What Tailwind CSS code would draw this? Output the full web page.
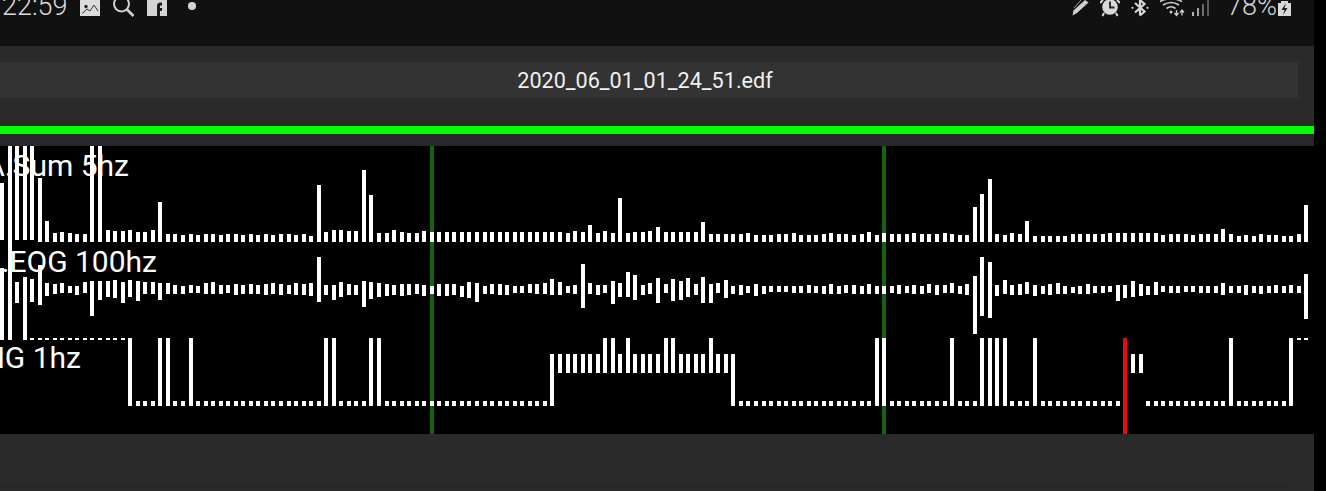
<!DOCTYPE html>
<html>
<head>
<meta charset="utf-8">
<script src="https://cdn.jsdelivr.net/npm/@tailwindcss/browser@4"></script>
</head>
<body class="bg-black overflow-hidden font-['Roboto',sans-serif]">
<div class="w-[1326px] h-[491px] flex bg-black overflow-hidden">
  <main class="w-[1314px] h-[491px] flex flex-col shrink-0">
    <!-- status bar -->
    <header class="h-[46px] bg-[#111111] flex justify-between items-start text-[#d8d8d8] shrink-0">
      <div class="flex items-start pl-[2px]">
        <span class="w-[65px] h-[20px] flex items-end text-[27px] leading-none font-light whitespace-nowrap">22:59</span>
        <svg class="ml-[13px]" width="20" height="17" viewBox="0 0 20 17"><rect width="20" height="16" fill="#dcdcdc"/><circle cx="6" cy="6.5" r="1.7" fill="#222"/><path d="M2 13.5 L7 9 L10 11 L14 5 L18 11" fill="none" stroke="#333" stroke-width="1"/></svg>
        <svg class="ml-[12px]" width="23" height="17" viewBox="0 0 23 17"><circle cx="9.5" cy="4" r="7.5" fill="none" stroke="#cfcfcf" stroke-width="2"/><path d="M15 9.5 L21.5 16" stroke="#cfcfcf" stroke-width="2.6"/></svg>
        <svg class="ml-[12px]" width="20" height="17" viewBox="0 0 20 17"><rect width="20" height="16" fill="#d4d4d4"/><path d="M10 16 V6 Q10 2.5 13.5 2.5 H15 V5.5 H13.8 Q13 5.5 13 6.5 V8 H15.2 L14.8 11 H13 V16 Z" fill="#1a1a1a"/></svg>
        <span class="ml-[21px] mt-[2px] w-[8px] h-[8px] rounded-full bg-[#d4d4d4]"></span>
      </div>
      <div class="flex items-start pr-[23px]">
        <svg width="18" height="17" viewBox="0 0 18 17"><path d="M14 0 L17.5 2.5 L6 13 L1.5 15.5 L2.5 10.5 Z" fill="#d0d0d0"/><path d="M3 8 L10 0" stroke="#999" stroke-width="1"/></svg>
        <svg class="ml-[11px]" width="20" height="17" viewBox="0 0 20 17"><circle cx="10" cy="7" r="7.8" fill="#d8d8d8"/><path d="M10 1.5 V7.5 H14.5" fill="none" stroke="#222" stroke-width="1.8"/><path d="M4 13 L2.5 16 M16 13 L17.5 16" stroke="#d8d8d8" stroke-width="2"/><path d="M0 3 L3 0 M17 0 L20 3" stroke="#d8d8d8" stroke-width="2"/></svg>
        <svg class="ml-[11px]" width="18" height="17" viewBox="0 0 18 17"><path d="M9 0 V15.5 M9 15.5 L13.5 11.5 L4 3 M9 0 L13.5 4 L4 12.5" fill="none" stroke="#d8d8d8" stroke-width="2.2"/><circle cx="1.5" cy="7.8" r="1.1" fill="#d8d8d8"/><circle cx="16.5" cy="7.8" r="1.1" fill="#d8d8d8"/></svg>
        <svg class="ml-[11px]" width="25" height="17" viewBox="0 0 25 17"><g fill="none" stroke="#cfcfcf" stroke-width="1.6"><path d="M0 1.5 Q11 -4 22 1.5"/><path d="M3 5 Q11 0 19 5"/><path d="M6.5 8.5 Q11 5 15.5 8.5"/></g><circle cx="11" cy="12" r="1.5" fill="#cfcfcf"/><path d="M16.5 10 V15 M14.5 13 L16.5 15.5 L18.5 13 M22 15.5 V10.5 M20 12.5 L22 10 L24 12.5" fill="none" stroke="#cfcfcf" stroke-width="1.3"/></svg>
        <svg class="ml-[7px]" width="18" height="17" viewBox="0 0 18 17"><rect x="0" y="12" width="2" height="4" fill="#b5b5b5"/><rect x="5" y="8" width="2" height="8" fill="#a0a0a0"/><rect x="10" y="4" width="2" height="12" fill="#6e6e6e"/><rect x="15" y="0" width="2" height="16" fill="#5a5a5a"/></svg>
        <span class="ml-[17px] w-[47px] h-[20px] flex items-end text-[27px] leading-none font-light whitespace-nowrap">78%</span>
        <svg class="ml-[4px]" width="13" height="17" viewBox="0 0 13 17"><rect y="3" width="13" height="13" fill="#d8d8d8"/><rect x="3" y="1" width="7" height="2" fill="#d8d8d8"/><path d="M8 3 L3.5 10 H6.5 L5 15 L9.5 8 H6.5 Z" fill="#1a1a1a"/></svg>
      </div>
    </header>

    <!-- file name bar -->
    <section class="h-[80px] bg-[#2a2a2a] pt-[16px] shrink-0 overflow-hidden">
      <div class="h-[36px] w-[1306px] -ml-[8px] pt-[1px] bg-[#333333] flex items-center justify-center text-[#f0f0f0] text-[21.6px] leading-none">2020_06_01_01_24_51.edf</div>
    </section>
    <div class="h-[8px] bg-[#00ff00] shrink-0"></div>
    <div class="h-[12px] bg-[#2a272b] shrink-0"></div>

    <!-- chart -->
    <section class="relative h-[288px] bg-black overflow-hidden shrink-0">
      <svg id="chart" class="absolute inset-0" width="1314" height="288" viewBox="0 146 1314 288" shape-rendering="crispEdges">
        <rect x="430" y="146" width="4" height="288" fill="#136313"/>
        <rect x="882" y="146" width="4" height="288" fill="#136313"/>
        <path id="bars" fill="#ffffff"/>
        <rect x="1123" y="338" width="4" height="96" fill="#e01010"/>
      </svg>
      <span class="absolute right-[1185px] top-[2px] text-[30px] leading-[36px] text-white whitespace-nowrap">A.Sum 5hz</span>
      <span class="absolute right-[1157px] top-[98px] text-[30px] leading-[36px] text-white whitespace-nowrap">L.EOG 100hz</span>
      <span class="absolute right-[1233px] top-[194px] text-[30px] leading-[36px] text-white whitespace-nowrap">EMG 1hz</span>
    </section>

    <!-- bottom bar -->
    <section class="flex-1 bg-[#2a2a2a] pt-[52px]">
      <div class="h-px w-[1290px] bg-[#252525]"></div>
    </section>
  </main>
</div>
<script>
(function () {
  var d = '';
  function bar(i, top, bottom) {
    var x = Math.round(7.54 * i);
    d += 'M' + x + ' ' + Math.round(top) + 'h4V' + Math.round(bottom) + 'h-4Z';
  }
  var Z = function (p) { return 190 + p / 3; };

  var c1a = [183,146,146,146,146,178,221,233,232,233,234,234,146,146,230,231,231,230,232,232,230,202,234,234,235,234,235,234,234,235,234,234,235,234,235,234,235,234,234,235,234,236,185,232,230,230,231,231,170,195,233,233,230,232,233,233,231];
  c1a.forEach(function (t, i) { bar(i, t, i < 5 ? 240 : 242); });
  var c1b = [127,127,127,127,127,127,127,127,127,127,127,127,127,127,127,127,127,127,130,123,127,105,130,123,130,25,130,127,127,123,112,127,127,127,127,127,97,133,133,133,
    132,132,129,135,135,135,132,132,129,135,135,135,132,129,132,132,135,132,126,135,129,132,132,132,129,132,132,132,129,132,135,135,51,12,-33,132,135,129,132,93,
    138,138,138,138,138,132,132,132,132,132,129,129,129,129,129,129,129,135,132,132,132,135,132,132,132,117,132,138,135,138,132,135,135,138,138,132,45];
  c1b.forEach(function (p, k) { bar(57 + k, Z(p), 242); });

  var c2a = [[70,285],[0,285],[110,175],[97,285],[103,172],[60,180],[115,152],[117,148],[115,145],[122,145],[122,150],[112,145],[108,212],[108,165],[108,155],[105,158],[112,175],[105,155],[108,168],[112,148],[112,148],[115,165],[115,148],[120,148],[122,148],[120,145],[122,145],[115,148],[112,148]];
  c2a.forEach(function (p, i) { bar(i, 245 + p[0] / 3, 245 + p[1] / 3); });
  bar(1, 240, 340); bar(3, 277, 340); bar(0, 268, 340);
  var c2m = [[285,294],[285,293],[284,295],[285,294],[284,294],[285,294],[284,295],[283,294],[284,295],[285,294],[283,295]];
  c2m.forEach(function (p, k) { bar(29 + k, p[0], p[1]); });
  var c2b = [[372,405],[368,408],[292,425],[375,405],[374,420],[366,412],[372,405],[375,405],[363,440],[366,417],[369,411],[372,408],[375,405],[372,408],[372,405],[372,402],[376,408]];
  c2b.forEach(function (p, k) { bar(40 + k, 160 + p[0] / 3, 160 + p[1] / 3); });
  var c2c = [[288,312],[282,318],[282,318],[282,315],[288,321],[276,324],[279,336],[288,312],[282,312],[282,315],[285,315],[288,309],[288,309],[282,309],[282,312],[278,312],[266,315],[276,315],[288,309],[285,312],[222,355],[280,312],[285,315],[285,309],[273,342],[279,321],[246,321],[255,330],[285,315],[279,312],[264,339],[282,309],[267,333],[273,330],[264,321],[282,315],[261,339],[282,339],[279,309],[270,324],
    [288,312],[285,315],[288,309],[282,318],[288,312],[288,306],[288,306],[288,306],[288,309],[288,309],[285,309],[288,309],[288,312],[282,312],[288,312],[285,309],[285,312],[288,312],[282,312],[288,312],[288,312],[288,309],[285,312],[288,309],[285,312],[288,312],[282,309],[285,315],[285,309],[279,309],[288,312],[282,315],[258,432],[201,378],[216,384],[285,318],[270,312],[285,315],[282,315],[276,312],
    [285,318],[288,312],[282,315],[279,312],[288,312],[291,309],[288,312],[282,312],[288,309],[288,309],[288,306],[285,333],[285,324],[273,321],[282,318],[288,315],[276,315],[288,306],[288,309],[288,309],[288,306],[288,306],[288,309],[288,309],[288,309],[279,315],[288,309],[288,309],[285,315],[288,309],[288,312],[288,309],[285,309],[288,309],[285,309],[288,309],[252,387]];
  c2c.forEach(function (p, k) { bar(57 + k, Z(p[0]), Z(p[1])); });

  var tall = [17,21,22,25,43,44,49,50,116,117,126,130,131,132,133,137,163,171];
  var up = [80,81,83,88,89,94];
  function ch3(i) {
    if (i < 4) return;
    if (i <= 16 || i >= 172) { bar(i, 338, 340); return; }
    if (i === 149) return;
    if (i === 150 || i === 151) { bar(i, 354, 373); return; }
    if (tall.indexOf(i) >= 0) { bar(i, 338, 405.6); return; }
    if (i === 73 || i === 97) { bar(i, 354, 405.6); return; }
    if (i > 73 && i < 97) { bar(i, up.indexOf(i) >= 0 ? 338 : 354, 373); return; }
    bar(i, 401, 405.6);
  }
  for (var i = 0; i < 174; i++) ch3(i);

  document.getElementById('bars').setAttribute('d', d);
})();
</script>
</body>
</html>
